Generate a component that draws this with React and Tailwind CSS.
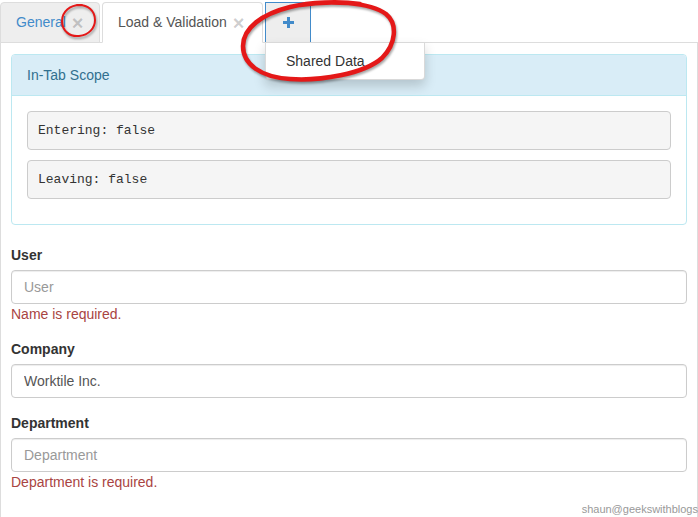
import React from 'react';

function CloseX() {
  return (
    <span className="ml-[6px] text-[20px] font-bold leading-none text-black/20">×</span>
  );
}

function PlusIcon() {
  return (
    <svg width="13" height="13" viewBox="0 0 13 13">
      <path d="M6.5 1v11M1 6.5h11" stroke="#428bca" strokeWidth="3" />
    </svg>
  );
}

function Field({ label, placeholder, value, error }) {
  return (
    <div className="mb-[15px]">
      <div className="mb-[5px] font-bold leading-[20px] text-[#333]">{label}</div>
      <input
        readOnly
        placeholder={placeholder}
        value={value || ''}
        className="block h-[34px] w-full rounded-[4px] border border-[#ccc] px-[12px] text-[14px] text-[#555] shadow-[inset_0_1px_1px_rgba(0,0,0,0.075)] placeholder:text-[#999] focus:outline-none"
      />
      {error && <div className="leading-[20px] text-[#a94442]">{error}</div>}
    </div>
  );
}

export default function App() {
  return (
    <div className="relative h-[517px] w-[698px] overflow-hidden bg-white font-['Liberation_Sans',Arial,sans-serif] text-[14px] text-[#333]">
      {/* Tabs */}
      <div className="flex h-[43px] items-start border-b border-[#ddd] pt-[2px]">
        <div className="mr-[2px] flex h-[41px] w-[100px] items-center rounded-t-[4px] border border-[#ddd] bg-[#eee] pl-[15px] text-[#428bca]">
          General
          <CloseX />
        </div>
        <div className="mr-[2px] flex h-[41px] w-[161px] items-center rounded-t-[4px] border border-[#ddd] border-b-transparent bg-white pl-[15px] text-[#555]">
          Load &amp; Validation
          <CloseX />
        </div>
        <div className="flex h-[41px] w-[46px] items-center justify-center border border-[#428bca] bg-[#eee]">
          <PlusIcon />
        </div>
      </div>

      {/* Tab content */}
      <div className="h-[474px] border-x border-[#ddd] px-[10px] pt-[11px]">
        <div className="mb-[20px] rounded-[4px] border border-[#bce8f1]">
          <div className="rounded-t-[3px] border-b border-[#bce8f1] bg-[#d9edf7] px-[15px] py-[10px] leading-[20px] text-[#31708f]">
            In-Tab Scope
          </div>
          <div className="p-[15px]">
            {['Entering: false', 'Leaving: false'].map((t) => (
              <div
                key={t}
                className="mb-[10px] flex h-[39px] items-center rounded-[4px] border border-[#ccc] bg-[#f5f5f5] px-[10px] font-['Liberation_Mono',monospace] text-[13px] text-[#333]"
              >
                {t}
              </div>
            ))}
          </div>
        </div>

        <Field label="User" placeholder="User" error="Name is required." />
        <Field label="Company" placeholder="Company" value="Worktile Inc." />
        <Field label="Department" placeholder="Department" error="Department is required." />
      </div>

      {/* Dropdown */}
      <div className="absolute left-[265px] top-[42px] w-[160px] rounded-b-[4px] border border-black/15 bg-white py-[5px] shadow-[0_6px_12px_rgba(0,0,0,0.175)]">
        <div className="px-[20px] py-[3px] leading-[20px] text-[#333]">Shared Data</div>
      </div>

      {/* Annotation marks */}
      <svg
        className="pointer-events-none absolute left-0 top-0 drop-shadow-[1px_2px_1px_rgba(0,0,0,0.35)]"
        width="698"
        height="517"
        viewBox="0 0 698 517"
        fill="none"
      >
        <path
          d="M82 5 C70 4 62 12 62 21 C62 31 70 37 79 36 C89 35 95 28 95 20 C95 11 88 4 77 5"
          stroke="#e41818"
          strokeWidth="2"
          strokeLinecap="round"
        />
        <path
          d="M300 5 C330 0 370 2 386 14 C398 24 396 44 382 58 C364 74 320 81 290 79 C260 77 243 64 243 46 C243 28 262 14 290 7 C310 2 340 1 360 4"
          stroke="#e41818"
          strokeWidth="4.5"
          strokeLinecap="round"
        />
      </svg>

      <div className="absolute bottom-[1px] right-0 text-[11px] leading-[14px] text-[#999]">
        shaun@geekswithblogs
      </div>
    </div>
  );
}
